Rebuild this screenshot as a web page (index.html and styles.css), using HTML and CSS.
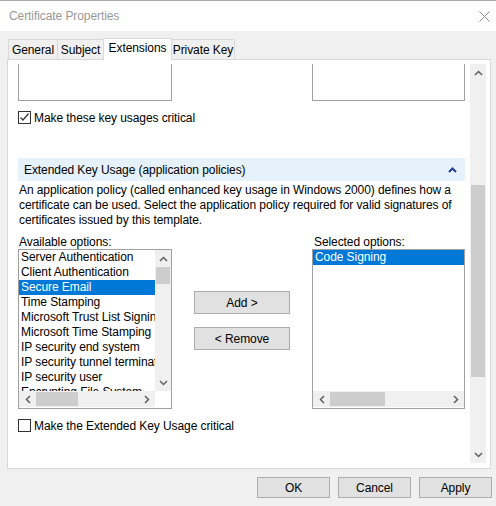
FILE: index.html
```html
<!DOCTYPE html>
<html>
<head>
<meta charset="utf-8">
<link rel="stylesheet" href="styles.css">
</head>
<body>
<div class="window">
  <div class="titlebar">
    <span class="title">Certificate Properties</span>
    <svg class="close" width="11" height="11" viewBox="0 0 11 11"><path d="M0.5 0.5L10.5 10.5M10.5 0.5L0.5 10.5" stroke="#8a8a8a" stroke-width="1" fill="none"/></svg>
  </div>
  <div class="tabs">
    <div class="tab t-general">General</div>
    <div class="tab t-subject">Subject</div>
    <div class="tab t-ext active">Extensions</div>
    <div class="tab t-pk">Private Key</div>
  </div>
  <div class="panel">
    <div class="viewport">
      <div class="content">
        <div class="top-row">
          <div class="box box-left"></div>
          <div class="box box-right"></div>
        </div>
        <label class="check-row row1">
          <span class="checkbox"><svg width="11" height="11" viewBox="0 0 11 11"><path d="M1.5 5.5L4 8L9.5 1.5" stroke="#333" stroke-width="1.2" fill="none"/></svg></span>
          <span>Make these key usages critical</span>
        </label>
        <div class="exp-header">
          <span>Extended Key Usage (application policies)</span>
          <svg width="9" height="6" viewBox="0 0 9 6"><path d="M1 5L4.5 1.5L8 5" stroke="#1f3f97" stroke-width="2" fill="none"/></svg>
        </div>
        <p class="desc">An application policy (called enhanced key usage in Windows 2000) defines how a certificate can be used. Select the application policy required for valid signatures of certificates issued by this template.</p>
        <div class="options">
          <div class="col col-left">
            <div class="label">Available options:</div>
            <div class="list list-left">
              <div class="items">
                <div class="item">Server Authentication</div>
                <div class="item">Client Authentication</div>
                <div class="item sel">Secure Email</div>
                <div class="item">Time Stamping</div>
                <div class="item">Microsoft Trust List Signing</div>
                <div class="item">Microsoft Time Stamping</div>
                <div class="item">IP security end system</div>
                <div class="item">IP security tunnel termination</div>
                <div class="item">IP security user</div>
                <div class="item">Encrypting File System</div>
              </div>
              <div class="vscroll">
                <div class="arrow"><svg width="9" height="6" viewBox="0 0 9 6"><path d="M1 5L4.5 1.5L8 5" stroke="#606060" stroke-width="1.5" fill="none"/></svg></div>
                <div class="vthumb"></div>
                <div class="vtrack"></div>
                <div class="arrow"><svg width="9" height="6" viewBox="0 0 9 6"><path d="M1 1L4.5 4.5L8 1" stroke="#606060" stroke-width="1.5" fill="none"/></svg></div>
              </div>
              <div class="hscroll">
                <div class="harrow"><svg width="6" height="9" viewBox="0 0 6 9"><path d="M5 1L1.5 4.5L5 8" stroke="#606060" stroke-width="1.5" fill="none"/></svg></div>
                <div class="hthumb hthumb-left"></div>
                <div class="htrack"></div>
                <div class="harrow"><svg width="6" height="9" viewBox="0 0 6 9"><path d="M1 1L4.5 4.5L1 8" stroke="#606060" stroke-width="1.5" fill="none"/></svg></div>
              </div>
              <div class="corner"></div>
            </div>
          </div>
          <div class="col col-mid">
            <button class="btn">Add &gt;</button>
            <button class="btn">&lt; Remove</button>
          </div>
          <div class="col col-right">
            <div class="label label-right">Selected options:</div>
            <div class="list list-right">
              <div class="items">
                <div class="item sel">Code Signing</div>
              </div>
              <div class="hscroll">
                <div class="harrow"><svg width="6" height="9" viewBox="0 0 6 9"><path d="M5 1L1.5 4.5L5 8" stroke="#606060" stroke-width="1.5" fill="none"/></svg></div>
                <div class="hthumb hthumb-right"></div>
                <div class="htrack"></div>
                <div class="harrow"><svg width="6" height="9" viewBox="0 0 6 9"><path d="M1 1L4.5 4.5L1 8" stroke="#606060" stroke-width="1.5" fill="none"/></svg></div>
              </div>
            </div>
          </div>
        </div>
        <label class="check-row row2">
          <span class="checkbox"></span>
          <span>Make the Extended Key Usage critical</span>
        </label>
      </div>
    </div>
    <div class="mainscroll">
      <div class="arrow"><svg width="9" height="6" viewBox="0 0 9 6"><path d="M1 5L4.5 1.5L8 5" stroke="#606060" stroke-width="1.5" fill="none"/></svg></div>
      <div class="mtrack top"></div>
      <div class="mthumb"></div>
      <div class="mtrack"></div>
      <div class="arrow"><svg width="9" height="6" viewBox="0 0 9 6"><path d="M1 1L4.5 4.5L8 1" stroke="#606060" stroke-width="1.5" fill="none"/></svg></div>
    </div>
  </div>
  <div class="footer">
    <button class="btn fbtn">OK</button>
    <button class="btn fbtn">Cancel</button>
    <button class="btn fbtn">Apply</button>
  </div>
</div>
</body>
</html>
```
FILE: styles.css
```css
* { box-sizing: border-box; }
html, body { margin: 0; padding: 0; }
body {
  width: 496px;
  height: 506px;
  overflow: hidden;
  background: #f0f0f0;
  font-family: "Liberation Sans", Arial, sans-serif;
  font-size: 12px;
  letter-spacing: -0.08px;
  color: #000;
}
.window { width: 496px; height: 506px; }
.titlebar {
  height: 31px;
  background: #fff;
  border-top: 1px solid #aaaaaa;
  display: flex;
  align-items: center;
  justify-content: space-between;
  padding: 0 6px 0 9px;
}
.title { color: #999; font-size: 12px; }
.close { display: block; }

.tabs {
  display: flex;
  align-items: flex-end;
  height: 28px;
  padding-left: 8px;
  position: relative;
  z-index: 2;
}
.tab {
  height: 20px;
  border: 1px solid #d9d9d9;
  border-bottom: 0;
  margin-right: -1px;
  text-align: center;
  line-height: 20px;
  background: #f0f0f0;
}
.t-general { width: 50px; }
.t-subject { width: 47px; }
.t-ext { width: 69px; }
.t-pk { width: 64px; }
.tab.active {
  height: 22px;
  background: #fff;
  margin-bottom: -1px;
  line-height: 18px;
  position: relative;
  z-index: 3;
}

.panel {
  margin-left: 7px;
  width: 484px;
  height: 410px;
  border: 1px solid #d9d9d9;
  background: #fff;
  display: flex;
  padding: 4px 4px 5px 0;
  position: relative;
  z-index: 1;
}
.viewport {
  width: 462px;
  height: 399px;
  overflow: hidden;
}
.content { padding: 0 4px 0 10px; }

.top-row { display: flex; justify-content: space-between; }
.box {
  height: 37px;
  border: 1px solid #a0a0a0;
  border-top: 0;
  background: #fff;
}
.box-left { width: 154px; }
.box-right { width: 153px; margin-right: 1px; }

.check-row {
  display: flex;
  align-items: center;
  height: 15px;
  gap: 3px;
}
.row1 { margin-top: 9px; }
.row2 { margin-top: 9px; }
.checkbox {
  width: 13px;
  height: 13px;
  border: 1px solid #333;
  background: #fff;
  display: flex;
  align-items: center;
  justify-content: center;
}
.checkbox svg { display: block; }

.exp-header {
  margin-top: 33px;
  height: 23px;
  width: 447px;
  background: #e5f1fb;
  display: flex;
  align-items: center;
  justify-content: space-between;
  padding: 1px 8px 0 6px;
}
.exp-header svg { display: block; }

.desc {
  margin: 2px 0 0 1px;
  line-height: 15px;
  width: 440px;
}

.options {
  display: flex;
  margin-top: 6px;
  width: 447px;
}
.label { height: 15px; line-height: 16px; padding-left: 1px; }
.label-right { padding-left: 2px; }
.col-left { width: 154px; }
.col-right { width: 153px; }
.col-mid {
  width: 140px;
  padding: 57px 22px 0;
  display: flex;
  flex-direction: column;
  gap: 13px;
}
.btn {
  font-family: inherit;
  font-size: 12px;
  letter-spacing: -0.08px;
  color: #000;
  background: #e1e1e1;
  border: 1px solid #adadad;
  border-radius: 0;
  padding: 0;
  margin: 0;
  height: 23px;
  width: 96px;
}

.list {
  height: 160px;
  border: 1px solid #a0a0a0;
  background: #fff;
  display: grid;
  grid-template-rows: 141px 16px;
}
.list-left { grid-template-columns: 136px 16px; }
.list-right { grid-template-columns: 151px; }
.items { overflow: hidden; }
.item {
  height: 15px;
  line-height: 15px;
  padding-left: 2px;
  white-space: nowrap;
  overflow: hidden;
}
.item.sel { background: #0078d7; color: #fff; }

.vscroll {
  background: #f0f0f0;
  display: flex;
  flex-direction: column;
}
.arrow {
  height: 17px;
  display: flex;
  align-items: center;
  justify-content: center;
  flex: none;
}
.arrow svg, .harrow svg { display: block; }
.vthumb { height: 17px; background: #cdcdcd; margin: 0 1px; }
.vtrack { flex: 1; }

.hscroll {
  background: #f0f0f0;
  display: flex;
  height: 16px;
}
.harrow {
  width: 17px;
  display: flex;
  align-items: center;
  justify-content: center;
  flex: none;
}
.hthumb { background: #cdcdcd; margin: 1px 0; }
.hthumb-left { width: 42px; }
.hthumb-right { width: 55px; }
.htrack { flex: 1; }
.corner { background: #fff; }

.mainscroll {
  width: 16px;
  height: 399px;
  background: #f0f0f0;
  display: flex;
  flex-direction: column;
}
.mtrack.top { height: 104px; flex: none; }
.mthumb { height: 192px; background: #cdcdcd; margin: 0 1px; }
.mtrack { flex: 1; }

.footer {
  display: flex;
  justify-content: flex-end;
  gap: 8px;
  padding: 8px 4px 0 0;
}
.fbtn { width: 73px; height: 21px; }
```
